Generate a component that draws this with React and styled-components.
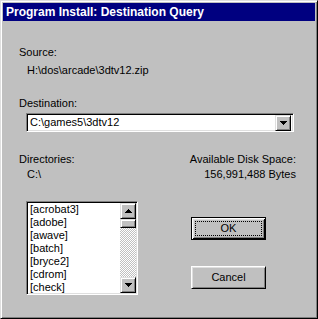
import React from "react";
import styled, { createGlobalStyle } from "styled-components";

const GlobalStyle = createGlobalStyle`
  html, body { margin: 0; padding: 0; background: #c0c0c0; }
  body { font-family: "Liberation Sans", Arial, sans-serif; font-size: 11px; color: #000; }
`;

const Window = styled.div`
  box-sizing: border-box;
  width: 318px;
  height: 319px;
  background: #c0c0c0;
  border: 1px solid;
  border-color: #dfdfdf #000 #000 #dfdfdf;
  box-shadow: inset 1px 1px #fff, inset -1px -1px #808080;
  padding: 2px;
  display: flex;
  flex-direction: column;
`;

const TitleBar = styled.div`
  height: 18px;
  background: #000080;
  color: #fff;
  font-weight: bold;
  font-size: 12px;
  line-height: 18px;
  padding-left: 3px;
  white-space: nowrap;
`;

const Body = styled.div`
  display: flex;
  flex-direction: column;
  padding: 0 19px 0 16px;
`;

const Label = styled.div`
  line-height: 13px;
  height: 13px;
  white-space: nowrap;
  margin-top: ${(p) => p.$mt || 0}px;
  margin-left: ${(p) => p.$ml || 0}px;
`;

const Combo = styled.div`
  box-sizing: border-box;
  margin: 3px 0 0 7px;
  width: 268px;
  height: 19px;
  background: #fff;
  border: 1px solid;
  border-color: #808080 #fff #fff #808080;
  box-shadow: inset 1px 1px #000, inset -1px -1px #dfdfdf;
  padding: 2px;
  display: flex;
  align-items: center;
`;

const ComboText = styled.div`
  flex: 1;
  padding-left: 1px;
  line-height: 13px;
  white-space: nowrap;
`;

const SmallButton = styled.div`
  box-sizing: border-box;
  width: 16px;
  height: ${(p) => p.$h || 16}px;
  flex: none;
  background: #c0c0c0;
  border: 1px solid;
  border-color: #dfdfdf #000 #000 #dfdfdf;
  box-shadow: inset 1px 1px #fff, inset -1px -1px #808080;
  display: flex;
  align-items: center;
  justify-content: center;
`;

const InfoRow = styled.div`
  display: flex;
  justify-content: space-between;
  margin-top: 21px;
`;

const Column = styled.div`
  display: flex;
  flex-direction: column;
  gap: 2px;
  align-items: ${(p) => (p.$right ? "flex-end" : "flex-start")};
`;

const BottomRow = styled.div`
  display: flex;
  margin-top: 20px;
`;

const ListBox = styled.div`
  box-sizing: border-box;
  margin-left: 7px;
  width: 112px;
  height: 94px;
  background: #fff;
  border: 1px solid;
  border-color: #808080 #fff #fff #808080;
  box-shadow: inset 1px 1px #000, inset -1px -1px #dfdfdf;
  padding: 1px;
  display: flex;
`;

const Items = styled.div`
  flex: 1;
  overflow: hidden;
  padding-left: 2px;
`;

const Item = styled.div`
  line-height: 13px;
  height: 13px;
  white-space: nowrap;
`;

const ScrollBar = styled.div`
  width: 16px;
  display: flex;
  flex-direction: column;
`;

const Track = styled.div`
  flex: 1;
  background: repeating-conic-gradient(#c0c0c0 0 25%, #fff 0 50%) 0 0 / 2px 2px;
`;

const ButtonColumn = styled.div`
  display: flex;
  flex-direction: column;
  margin: 16px 0 0 53px;
  gap: 26px;
`;

const Button = styled.div`
  box-sizing: border-box;
  width: 75px;
  height: 23px;
  background: #c0c0c0;
  border: 1px solid;
  border-color: ${(p) => (p.$default ? "#000" : "#fff #000 #000 #fff")};
  box-shadow: ${(p) =>
    p.$default
      ? "inset 1px 1px #fff, inset -1px -1px #000, inset 2px 2px #dfdfdf, inset -2px -2px #808080"
      : "inset 1px 1px #dfdfdf, inset -1px -1px #808080"};
  display: flex;
  align-items: center;
  justify-content: center;
  padding: 3px;
`;

const Focus = styled.div`
  box-sizing: border-box;
  width: 100%;
  height: 100%;
  border: ${(p) => (p.$on ? "1px dotted #000" : "1px solid transparent")};
  display: flex;
  align-items: center;
  justify-content: center;
  line-height: 13px;
`;

const Arrow = ({ up }) => (
  <svg width="7" height="4" viewBox="0 0 7 4" shapeRendering="crispEdges">
    {up ? (
      <path d="M3 0h1v1h1v1h1v1h1v1H0V3h1V2h1V1h1z" fill="#000" />
    ) : (
      <path d="M0 0h7v1H6v1H5v1H4v1H3V3H2V2H1V1H0z" fill="#000" />
    )}
  </svg>
);

const dirs = ["[acrobat3]", "[adobe]", "[awave]", "[batch]", "[bryce2]", "[cdrom]", "[check]"];

export default function App() {
  return (
    <>
      <GlobalStyle />
      <Window>
        <TitleBar>Program Install: Destination Query</TitleBar>
        <Body>
          <Label $mt={25}>Source:</Label>
          <Label $mt={5} $ml={8}>H:\dos\arcade\3dtv12.zip</Label>
          <Label $mt={20}>Destination:</Label>
          <Combo>
            <ComboText>C:\games5\3dtv12</ComboText>
            <SmallButton>
              <Arrow />
            </SmallButton>
          </Combo>
          <InfoRow>
            <Column>
              <Label>Directories:</Label>
              <Label $ml={8}>C:\</Label>
            </Column>
            <Column $right>
              <Label>Available Disk Space:</Label>
              <Label>156,991,488 Bytes</Label>
            </Column>
          </InfoRow>
          <BottomRow>
            <ListBox>
              <Items>
                {dirs.map((d) => (
                  <Item key={d}>{d}</Item>
                ))}
              </Items>
              <ScrollBar>
                <SmallButton>
                  <Arrow up />
                </SmallButton>
                <SmallButton $h={9} />
                <Track />
                <SmallButton>
                  <Arrow />
                </SmallButton>
              </ScrollBar>
            </ListBox>
            <ButtonColumn>
              <Button $default>
                <Focus $on>OK</Focus>
              </Button>
              <Button>
                <Focus>Cancel</Focus>
              </Button>
            </ButtonColumn>
          </BottomRow>
        </Body>
      </Window>
    </>
  );
}
